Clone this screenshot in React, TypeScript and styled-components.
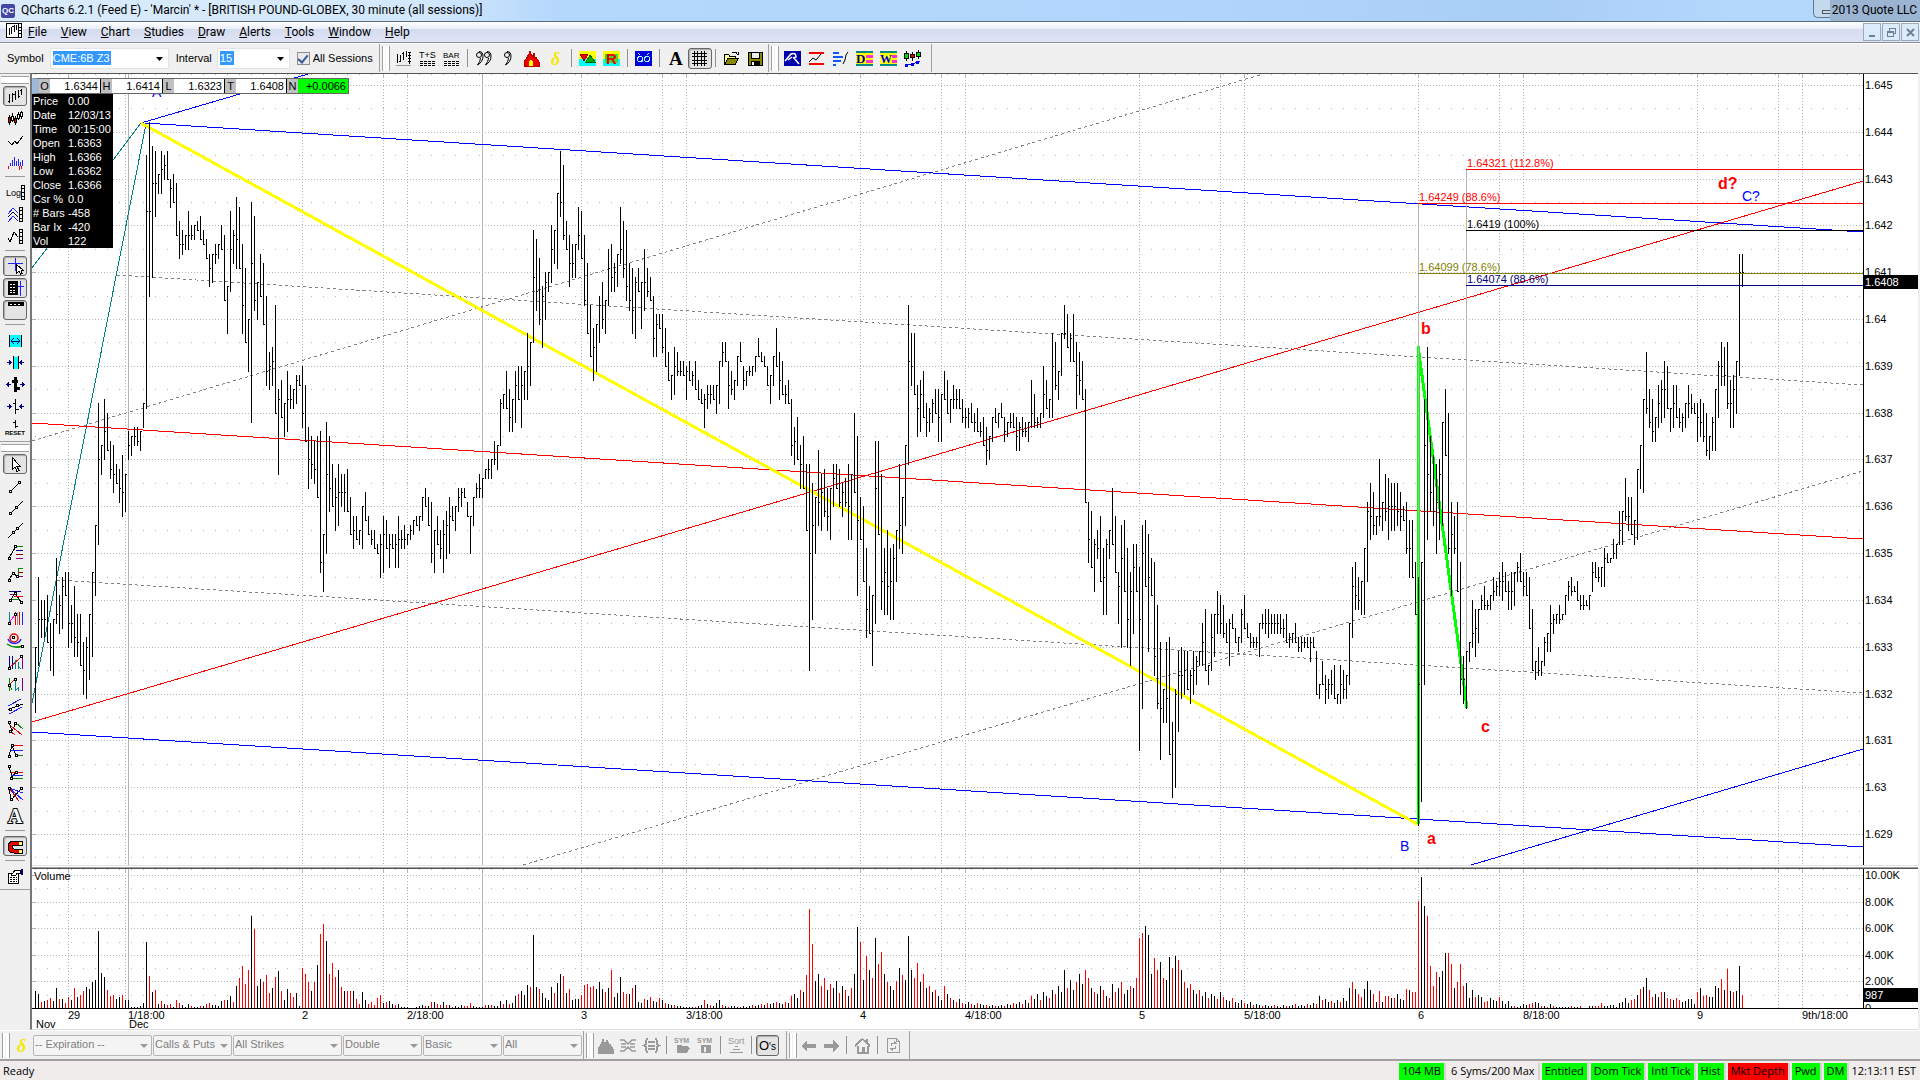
import React from "react";
import styled, { createGlobalStyle, css } from "styled-components";

/* ------------------------------------------------------------------ */
/* Market data                                                         */
/* ------------------------------------------------------------------ */

const TICK = 4.681;
const BAR_STEP = 3;
const FIRST_BAR = 3;
const TOP_OFFSET = 11;
const VOLUME_BASE = 139;

// "high,low" of each 30 minute bar, in ticks below 1.6450
const RANGES = `
120,134 105,124 110,118 110,118 109,119 115,125 114,126 101,115 109,117 105,116
104,109 104,120 111,119 107,122 113,122 113,124 119,130 118,131 113,127 104,122
94,109 68,98 77,83 67,80 70,78 76,84 77,87 81,85 82,89 79,92
83,91 74,80 75,79 73,77 73,77 74,78 68,73 15,69 8,45 13,41
14,28 19,23 14,23 15,20 14,20 20,26 19,25 21,32 29,37 31,36
32,35 27,35 30,33 30,33 29,31 28,33 31,34 33,37 36,43 36,42
34,38 34,37 30,35 32,46 43,53 27,44 31,38 24,39 26,39 34,53
39,55 50,61 25,72 28,48 42,50 36,45 38,51 45,64 57,65 56,64
47,70 65,83 63,71 68,75 61,74 64,69 65,69 62,68 62,64 60,73
64,76 73,86 75,84 76,85 75,88 74,104 96,108 72,100 75,91 81,90
84,95 81,94 83,90 83,91 82,91 88,96 92,99 92,97 95,98 90,99
87,93 92,96 95,98 95,99 98,100 96,105 92,104 93,99 96,103 96,99
96,103 92,103 95,99 94,99 96,98 94,97 93,96 92,94 92,95 88,93
86,90 88,94 89,102 95,104 92,98 95,101 93,104 91,101 88,100 90,93
90,95 86,91 86,90 86,88 89,92 92,100 88,94 85,88 83,88 84,88
82,84 80,84 80,84 76,81 77,82 67,77 66,69 61,69 65,74 67,74
61,72 60,67 60,73 61,67 53,67 55,64 31,55 33,48 37,51 43,56
40,50 40,44 30,42 31,38 23,39 14,28 17,33 29,35 32,43 34,41
34,41 26,35 27,37 32,47 38,53 47,58 52,63 51,61 45,55 42,52
46,53 35,47 34,44 38,44 36,43 26,38 29,41 31,46 38,48 39,53
41,54 39,44 42,52 35,48 39,45 41,46 45,58 49,58 49,52 49,57
52,60 57,63 62,67 56,66 57,62 59,62 59,62 60,67 59,63 61,64
59,65 63,67 65,68 66,73 64,69 64,68 64,67 64,70 59,68 55,60
55,59 59,69 61,66 63,67 58,64 55,59 60,65 61,64 60,62 60,62
58,61 54,58 57,59 58,60 60,64 62,68 58,64 52,60 57,67 59,66
64,68 63,68 67,79 73,81 71,80 77,86 75,86 81,95 81,125 85,114
88,100 78,94 83,95 82,92 86,95 86,97 81,90 81,86 82,90 85,92
84,90 81,97 83,97 70,87 75,109 88,97 90,106 99,118 107,117 109,124
76,115 76,96 83,112 99,113 95,113 99,114 98,114 95,106 81,99 88,100
77,94 47,81 53,64 53,66 64,75 63,74 61,71 68,75 69,74 67,72
65,70 65,76 66,76 61,67 63,70 67,72 64,69 65,69 65,69 67,72
69,73 69,73 68,72 70,74 69,74 72,75 71,77 73,81 75,80 71,76
69,72 70,73 68,71 71,76 72,75 70,73 70,73 71,78 72,78 71,75
72,75 72,76 63,73 66,73 71,73 70,73 60,71 63,69 67,71 53,71
55,65 61,67 53,62 47,54 49,56 53,59 49,59 55,69 57,66 59,67
65,89 89,102 91,103 97,108 95,101 92,106 99,113 97,113 95,101 86,98
92,104 104,115 94,120 93,108 99,120 104,124 98,117 98,108 103,142 94,133
93,107 96,121 101,109 102,126 111,133 119,144 129,136 119,136 118,143 136,152
129,150 121,138 120,131 121,130 121,129 125,132 121,130 122,128 121,124 115,124
112,125 124,128 113,125 113,122 108,117 109,117 111,118 115,119 114,124 113,116
116,119 118,121 112,119 109,116 115,118 117,120 118,120 118,120 115,122 113,116
112,117 112,118 113,117 113,117 113,117 113,117 114,118 113,119 117,120 117,119
115,119 118,121 118,121 118,120 118,120 118,123 118,120 121,130 128,131 123,128
126,132 127,131 125,130 124,131 130,132 124,132 125,131 126,131 115,128 103,118
102,112 105,112 106,113 99,113 89,106 85,97 87,96 92,96 80,94 89,95
83,93 84,97 85,95 85,95 85,94 87,95 90,93 89,100 93,105 93,105
102,113 105,158 102,153 67,128 56,97 75,91 79,94 81,100 80,97 72,94
65,79 70,100 89,109 92,100 89,108 102,130 122,132 121,133 119,123 110,120
112,122 112,119 109,112 107,112 110,112 109,112 105,110 106,109 104,109 102,110
104,108 106,112 104,112 104,111 102,106 100,106 104,109 104,109 105,116 112,125
123,127 120,126 123,126 118,124 117,121 111,121 113,117 113,115 111,115 113,114
109,113 106,110 105,109 107,108 106,110 109,112 109,112 110,111 109,112 102,108
102,105 103,106 103,107 99,107 100,102 101,102 97,101 98,101 91,98 91,98
84,93 88,95 88,96 93,98 82,97 77,86 67,87 57,70 65,73 67,76
71,76 64,73 63,72 59,71 60,69 69,74 64,73 64,71 69,73 70,74
68,73 64,71 66,70 68,70 68,76 67,75 68,76 70,79 75,80 71,78
65,78 59,71 55,64 56,64 55,69 63,73 62,73 59,70 36,62 36,43`
  .trim()
  .split(/\s+/)
  .map((pair) => pair.split(",").map(Number));

// bar heights of the volume study; a negative value is a down bar
const VOLUMES = `
17 14 -6 7 -8 -10 7 20 -9 9 -5 -11 8 -20 11 -13 -17 21 19 26
28 77 35 31 -18 -12 -13 9 11 -13 8 8 1 1 1 2 5 66 -32 16
-18 4 -7 4 -3 -4 1 -8 -5 3 1 4 -2 1 1 -2 2 -4 -5 3
3 2 7 -8 8 12 -6 22 -30 -42 -24 -38 92 -79 22 29 -26 -33 -15 20
-31 37 -17 8 19 -15 -11 15 2 -40 -34 -26 17 -26 43 -74 -84 67 -34 -45
-31 38 -21 17 -17 -17 17 -9 -4 16 8 -4 -6 -3 -10 -13 5 -6 7 4
-3 4 1 1 1 0 0 1 2 3 -2 2 -6 6 -4 -3 6 -3 3 -1
2 1 3 -2 -2 -5 2 1 1 1 -3 3 -3 2 2 7 -4 8 -4 5
12 -14 17 13 23 -21 73 21 -19 15 10 8 21 -15 25 34 -32 15 -19 8
9 9 -13 -23 -24 -21 -22 19 26 19 -16 20 -38 11 15 31 -16 -14 14 -20
23 6 5 -9 8 -11 7 6 -10 8 -5 4 3 -3 2 2 1 1 1 1
-1 2 3 -8 4 -3 2 5 8 -3 2 -1 2 2 1 -1 2 1 2 -3
2 3 -4 3 -5 4 5 -6 5 4 -6 5 -12 14 10 -18 16 -33 -99 -64
27 34 -22 -30 18 -24 20 27 -15 22 -18 12 -20 34 81 -66 28 -52 38 -30
70 -44 -56 34 -26 22 18 -27 40 -33 28 72 38 -30 -45 26 -34 20 -22 16
-18 12 8 -22 14 -10 8 -6 9 -5 4 6 -4 3 -5 4 3 -3 2 3
-2 2 3 -2 4 3 -5 4 6 -4 8 5 -12 9 14 -8 16 12 -10 18
-14 22 16 38 -20 28 18 -26 34 24 -38 -30 20 -16 14 22 -18 12 -10 24
-16 20 -26 14 18 -22 20 -30 -70 -75 82 73 34 -50 -38 46 -30 28 51 -40
52 -48 38 -26 20 -24 18 14 -18 12 16 -10 14 12 -9 16 -11 8 7 -10
6 5 8 -5 4 6 -3 4 3 -2 3 2 2 -3 2 1 3 -2 2 3
-4 2 3 2 -4 3 5 -4 12 -8 9 6 -7 5 8 -6 10 7 20 -26
19 -14 -11 19 27 18 -14 6 -17 6 -12 -12 10 -10 14 9 8 -19 18 -16
-16 -107 131 102 -92 -42 -22 -36 31 37 55 -55 -44 20 -26 -44 -22 25 10 18
-11 13 11 -6 -7 10 8 7 -11 7 4 7 2 -2 1 2 4 3 -4 -5
6 5 -2 2 -1 4 -2 1 1 1 1 1 -2 1 1 -2 0 0 2 2
-2 -2 -5 2 2 3 3 1 5 6 10 5 -8 -9 13 -19 21 30 -18 -11
14 11 -16 16 -10 -9 8 -10 -8 6 7 9 9 4 -16 20 -12 -13 11 11
22 20 -29 18 -39 17 -16 17 42 -13`
  .trim()
  .split(/\s+/)
  .map(Number);

const barX = (i: number) => FIRST_BAR + i * BAR_STEP + 0.5;
const priceY = (ticks: number) => TOP_OFFSET + Math.round(ticks * TICK);

const closeOf = (i: number) => {
  const [high, low] = RANGES[i];
  const [nextHigh, nextLow] = RANGES[i + 1] ?? RANGES[i];
  return Math.min(low, Math.max(high, Math.round((nextHigh + nextLow) / 2)));
};

const PRICE_PATH = RANGES.map(
  ([high, low], i) =>
    `M${barX(i)} ${priceY(high)}V${priceY(low) + 1}M${barX(i) + 0.5} ${priceY(closeOf(i)) + 0.5}h1`
).join("");

const volumePath = (down: boolean) =>
  VOLUMES.map((v, i) =>
    v !== 0 && v < 0 === down ? `M${barX(i)} ${VOLUME_BASE}v${-Math.abs(v)}` : ""
  ).join("");

const DOTTED_COLUMNS = [36, 93, 270, 351, 375, 549, 630, 654, 828, 909, 933, 1107, 1188, 1212, 1386, 1467, 1491, 1665, 1746, 1770];
const SOLID_COLUMNS = [96, 450];

const PRICE_LABELS = Array.from({ length: 17 }, (_, i) => String(Number((1.645 - i * 0.001).toFixed(3))));

const TIME_LABELS: [number, string][] = [
  [36, "29"], [96, "1/18:00"], [270, "2"], [375, "2/18:00"], [549, "3"], [654, "3/18:00"], [828, "4"],
  [933, "4/18:00"], [1107, "5"], [1212, "5/18:00"], [1386, "6"], [1491, "8/18:00"], [1665, "9"], [1770, "9th/18:00"],
];

const QUOTE: [string, string][] = [["O", "1.6344"], ["H", "1.6414"], ["L", "1.6323"], ["T", "1.6408"], ["N", "+0.0066"]];

const CURSOR_ROWS: [string, string][] = [
  ["Price", "0.00"], ["Date", "12/03/13"], ["Time", "00:15:00"], ["Open", "1.6363"], ["High", "1.6366"], ["Low", "1.6362"],
  ["Close", "1.6366"], ["Csr %", "0.0"], ["# Bars", "-458"], ["Bar Ix", "-420"], ["Vol", "122"],
];

/* ------------------------------------------------------------------ */
/* Styles                                                              */
/* ------------------------------------------------------------------ */

const UI = `Roboto, "Open Sans", sans-serif`;
const ARIAL = `"Liberation Sans", Arial, sans-serif`;

const GlobalStyle = createGlobalStyle`
  * { box-sizing: border-box; }
  body { margin: 0; background: #f0f0f0; }
  button, input, select { font: inherit; margin: 0; color: inherit; }
`;

const Shell = styled.div`
  display: flex;
  flex-direction: column;
  min-height: 100vh;
  font: 11px/14px ${ARIAL};
  color: #000;
  overflow: hidden;
`;

const TitleBar = styled.header`
  display: flex;
  align-items: stretch;
  height: 22px;
  background: linear-gradient(90deg, #d9ebfb 0, #d3e8fc 420px, #b4d7fc 560px, #b2d6fb 60%, #a9cef5 80%, #b4d7fc 90%);
  border-bottom: 1px solid #5a6a7c;
  font: 12px/21px ${UI};
`;

const AppBadge = styled.span`
  align-self: center;
  width: 14px;
  height: 14px;
  margin: 0 6px 0 1px;
  border-radius: 2px;
  background: #4247a5;
  color: #fff;
  font: bold 8px/14px ${ARIAL};
  text-align: center;
`;

const Title = styled.h1`
  flex: 1;
  margin: 0;
  font: inherit;
  white-space: nowrap;
`;

const CaptionButton = styled.button`
  width: 17px;
  height: 18px;
  padding: 0 0 0 8px;
  border: 1px solid #5f7690;
  border-width: 0 0 1px 1px;
  border-radius: 0 0 0 5px;
  background: #c5d9ee;
`;

const Copyright = styled.span`
  padding: 0 3px 0 2px;
  background: #9ab4d1;
  white-space: nowrap;
`;

const MenuBar = styled.nav`
  display: flex;
  align-items: stretch;
  height: 21px;
  padding: 0 1px 0 6px;
  background: linear-gradient(#fff, #e8edf8 35%, #d5dcef 36%, #dfe4f5);
  border-bottom: 1px solid #8e8f94;
  font: 12px/20px ${UI};
`;

const MenuIcon = styled.span`
  width: 15px;
  height: 17px;
  svg { background: #fff; }
`;

const MenuItem = styled.button`
  padding: 0 7px;
  border: 0;
  background: none;
  &::first-letter { text-decoration: underline; }
`;

const Spacer = styled.div`
  flex: 1;
`;

const MdiButton = styled.button`
  width: 18px;
  height: 18px;
  margin: 1px 0 0 1px;
  padding: 0;
  border: 1px solid #9aabbd;
  background: #dcebf9;
  display: grid;
  place-items: center;
`;

const Toolbar = styled.div`
  display: flex;
  align-items: flex-start;
  height: 30px;
  border-top: 1px solid #fff;
  background: #f0f0f0;
`;

const ToolButton = styled.button<{ $pressed?: boolean; $side?: boolean }>`
  display: grid;
  place-items: center;
  flex: none;
  width: 24px;
  height: ${({ $side }) => ($side ? 22 : 24)}px;
  padding: 0;
  border: 0;
  background: none;
  ${({ $pressed, $side }) =>
    $pressed &&
    css`
      height: ${$side ? 20 : 21}px;
      ${$side && "margin: 1px 0;"}
      border: 1px solid #666;
      border-radius: 3px;
      background: #e4e4e4;
      box-shadow: inset 1px 1px 1px #aaa;
    `}
`;

const Band = styled.div<{ $grip?: boolean; $tight?: boolean; $end?: number }>`
  display: flex;
  align-items: center;
  height: 28px;
  padding-right: ${({ $end = 0 }) => $end}px;
  border-right: 1px solid #a0a0a0;
  ${({ $grip, $tight }) =>
    $grip &&
    css`
      &::before {
        content: "";
        width: 6px;
        height: 25px;
        margin: 0 ${$tight ? 0 : 2}px 0 2px;
        border: 1px solid #a0a0a0;
        border-width: 0 1px;
        background: linear-gradient(90deg, #fff 2px, #f0f0f0 2px, #f0f0f0 3px, #fff 3px);
      }
    `}
  ${({ $tight }) => $tight && css`${ToolButton} { width: 23px; }`}
`;

const Field = styled.label<{ $gap: number }>`
  display: flex;
  align-items: center;
  gap: ${({ $gap }) => $gap}px;
  padding-left: 7px;
`;

const Combo = styled.span<{ $width: number }>`
  display: flex;
  align-items: flex-start;
  width: ${({ $width }) => $width}px;
  height: 21px;
  padding: 2px;
  border: 1px solid #e3e3ea;
  background: #fff;
`;

const ComboInput = styled.input<{ $width: number }>`
  width: ${({ $width }) => $width}px;
  height: 14px;
  padding: 0;
  border: 0;
  background: #3399ff;
  color: #fff;
`;

const ArrowButton = styled.button`
  display: grid;
  place-items: center;
  width: 13px;
  height: 16px;
  margin-left: auto;
  padding: 0;
  border: 0;
  background: none;
`;

const SessionCheck = styled.label`
  display: flex;
  align-items: center;
  gap: 3px;
  padding: 0 6px 0 7px;
  input {
    appearance: none;
    width: 13px;
    height: 13px;
    border: 1px solid #8e8f8f;
    background: #e6eaef;
    display: grid;
    place-items: center;
  }
  input:checked::after {
    content: "";
    width: 4px;
    height: 8px;
    margin-bottom: 2px;
    border: solid #3c5a9a;
    border-width: 0 2px 2px 0;
    transform: rotate(40deg);
  }
`;

const Divider = styled.span`
  width: 1px;
  height: 18px;
  margin: 0 4px 0 3px;
  background: #909090;
`;

const Workspace = styled.main`
  display: flex;
  flex: 1;
`;

const SideBar = styled.aside`
  flex: none;
  width: 30px;
  border-top: 1px solid #a0a0a0;
`;

const SideBand = styled.div`
  display: flex;
  flex-direction: column;
  align-items: center;
  padding-bottom: 2px;
  border-bottom: 1px solid #a0a0a0;
  &::before {
    content: "";
    width: 28px;
    height: 6px;
    margin: 2px 0 1px;
    border: 1px solid #a0a0a0;
    border-width: 1px 0;
    background: #fff;
  }
`;

const SideDivider = styled.span`
  width: 20px;
  height: 1px;
  margin: 3px 0 4px;
  background: #999;
`;

const ChartFrame = styled.section`
  display: flex;
  flex: 1;
  flex-direction: column;
  min-width: 0;
  margin-right: 2px;
  border: 2px solid #a0a0a0;
  border-top: 1px solid #555;
  border-left-color: #777;
  border-right: 0;
  border-bottom: 1px solid #dcdcdc;
  background: #fff;
`;

const Pane = styled.div<{ $height?: number }>`
  display: flex;
  position: relative;
  min-height: 0;
  ${({ $height }) => ($height ? `height: ${$height}px;` : "flex: 1 0 791px;")}
`;

const Splitter = styled.div`
  height: 4px;
  background: linear-gradient(#e3e3e3 1px, #fff 1px, #fff 2px, #a0a0a0 2px, #a0a0a0 3px, #555 3px);
`;

const Plot = styled.svg`
  flex: 1;
  min-width: 0;
  height: 100%;
  shape-rendering: crispEdges;
  font: 11px ${ARIAL};
`;

const Axis = styled.svg`
  flex: none;
  width: 55px;
  height: 100%;
  border-left: 1px solid #000;
  font: 11px ${ARIAL};
`;

const TimeAxis = styled.svg`
  width: 100%;
  height: 21px;
  border-top: 1px solid #000;
  font: 11px ${ARIAL};
`;

const QuoteStrip = styled.dl`
  position: absolute;
  top: 4px;
  left: 0;
  display: flex;
  margin: 0;
  border: 1px solid #666;
  border-left: 7px solid #9db8d9;
  background: #fff;
  dt {
    width: 11px;
    background: #c0c0c0;
    text-align: center;
  }
  dd {
    width: 51px;
    margin: 0;
    padding-right: 2px;
    border-right: 1px solid #000;
    text-align: right;
  }
  dd:last-child {
    width: 50px;
    border: 0;
    background: #0f0;
  }
`;

const CursorTable = styled.table`
  position: absolute;
  top: 20px;
  left: 0;
  width: 81px;
  border-spacing: 0;
  background: #000;
  color: #fff;
  th,
  td {
    height: 14px;
    padding: 0 0 0 1px;
    font-weight: normal;
    text-align: left;
    white-space: nowrap;
  }
  th { width: 35px; }
`;

const BottomBar = styled(Toolbar)`
  border-bottom: 1px solid #a0a0a0;
`;

const Picker = styled.label<{ $width: number }>`
  position: relative;
  width: ${({ $width }) => $width}px;
  margin-right: 1px;
  color: #808080;
  select {
    appearance: none;
    width: 100%;
    height: 21px;
    padding: 0 14px 2px 1px;
    border: 1px solid #b5b5b5;
    border-radius: 2px;
    background: #f4f4f4;
    color: #808080;
    opacity: 1;
  }
  &::after {
    content: "";
    position: absolute;
    top: 9px;
    right: 4px;
    border: 4px solid transparent;
    border-top-color: #999;
    border-bottom: 0;
  }
`;

const StatusBar = styled.footer`
  display: flex;
  align-items: stretch;
  gap: 4px;
  height: 20px;
  padding: 2px 4px 0 3px;
  border-top: 1px solid #a0a0a0;
  background: #f0ecec;
  font: 11px/16px "Open Sans", "Noto Sans", sans-serif;
  white-space: nowrap;
`;

const Chip = styled.span<{ $tone?: "on" | "off" }>`
  padding: 0 3px;
  box-shadow: 2px 0 0 #d7d3d3;
  background: ${({ $tone }) => ($tone === "on" ? "#00ff00" : $tone === "off" ? "#ff0000" : "none")};
`;

const IconSvg = styled.svg`
  display: block;
  overflow: visible;
  shape-rendering: crispEdges;
  fill: none;
  stroke: #000;
  text { stroke: none; fill: #000; }
`;

/* ------------------------------------------------------------------ */
/* Icons, drawn on a 17 x 17 grid                                      */
/* ------------------------------------------------------------------ */

const Node = ({ at }: { at: [number, number][] }) => (
  <>{at.map(([x, y]) => <rect key={`${x}-${y}`} x={x - 0.5} y={y - 0.5} width="2" height="2" fill="#fff" />)}</>
);

const G = "#999";
const rows = <path d="M1 11.5H16M1 13.5H16M1 15.5H16" strokeDasharray="3 1" />;
const scale = <path d="M12.5 1.5H15.5V15.5H12.5ZM12 4.5H16M12 8.5H16M12 12.5H16" />;

const ICONS: Record<string, React.ReactNode> = {
  menuChart: <path d="M0.5 1.5H15.5V15.5H0.5ZM3.5 6V13M5.5 5V12M8.5 3V10M8 4.5H6M10.5 3V8M12.5 2V15M13 5.5H15M13 8.5H15M13 11.5H15" />,
  chart: <><path d="M1 15.5H16" stroke={G} /><path d="M2.5 4V13M5.5 5V12M5 11.5H4M8.5 2V10M8 3.5H7M11.5 1V7M14.5 1.5V14M13 2.5H16M13 5.5H16M13 8.5H16M13 11.5H16" /></>,
  timeSales: <><text x="0" y="8" fontSize="9">T+S</text>{rows}</>,
  bar: <><text x="0" y="8" fontSize="8">BAR</text>{rows}</>,
  quotes: <g shapeRendering="auto"><circle cx="4" cy="5" r="2.5" /><path d="M4 1.5Q8 1.5 8 6Q8 12 2.5 15Q5.5 11 5.5 8" /><circle cx="12" cy="5" r="2.5" /><path d="M12 1.5Q16 1.5 16 6Q16 12 10.5 15Q13.5 11 13.5 8" /></g>,
  quote: <g shapeRendering="auto"><circle cx="8" cy="5" r="2.5" /><path d="M8 1.5Q12 1.5 12 6Q12 12 6.5 15Q9.5 11 9.5 8" /></g>,
  fire: <><path d="M1 16V12L4 7V10L7 1L9 8L11 3L12 8L13 7L16 12V16Z" fill="#e00" stroke="#b00" /><path d="M6 16V12L8 9L10 12V16Z" fill="#ff0" stroke="none" /></>,
  delta: <text x="4" y="15" fontSize="18" fontStyle="italic" fontWeight="bold" fontFamily="Liberation Serif" style={{ fill: "#f4e800" }}>δ</text>,
  hotList: <><path d="M0 1H17V9H0Z" fill="#ff0" stroke="none" /><path d="M0 9H17V16H0Z" fill="#0ff" stroke="none" /><path d="M1 4H9L5 11Z" fill="#e00" stroke="#a00" /><path d="M7 12L11 5L16 12Z" fill="#0a0" stroke="#060" /></>,
  rank: <><path d="M0 1H17V9H0Z" fill="#ff0" stroke="none" /><path d="M0 9H17V16H0Z" fill="#0ff" stroke="none" /><path d="M2 4H15V13H2Z" fill="#3d3" stroke="none" /><text x="3" y="14" fontSize="15" fontWeight="bold" style={{ fill: "#e00" }}>R</text></>,
  qc: <><path d="M0 1H17V16H0Z" fill="#00d" stroke="none" /><g stroke="#9ff"><circle cx="5" cy="9" r="2.5" /><circle cx="12" cy="9" r="2.5" /><path d="M6 10L8 12M3 3L5 5M14 3L12 5" /></g></>,
  letterA: <text x="2" y="15" fontSize="19" fontFamily="Liberation Serif" fontWeight="bold">A</text>,
  grid: <path d="M1 3.5H16M1 6.5H16M1 10.5H16M1 13.5H16M3.5 1V16M6.5 1V16M10.5 1V16M13.5 1V16" />,
  open: <><path d="M1.5 14.5V4.5H5.5L7 6.5H12.5V8.5" fill="#ff9" /><path d="M1.5 14.5L5 8.5H15.5L12 14.5Z" fill="#880" /><path d="M9 2.5H13L14.5 5M15 2V5" /></>,
  save: <><path d="M1.5 2.5H15.5V15.5H1.5Z" fill="#880" /><path d="M4.5 2.5H12.5V8.5H4.5Z" fill="#eee" /><path d="M4.5 11H12.5V15.5H4.5Z" fill="#000" /><path d="M6 12V15" stroke="#fff" strokeWidth="2" /></>,
  wave: <><path d="M0 1H17V16H0Z" fill="#00a" stroke="none" /><path shapeRendering="auto" d="M1 11L7 4Q12 2 12 7L9 8M10 8L15 14M4 10L8 7" stroke="#fff" strokeWidth="1.5" /></>,
  channel: <><path d="M1 3H16M1 14H16" stroke="#f00" strokeWidth="2" /><path shapeRendering="auto" d="M1 12L5 8L8 10L13 4" /></>,
  profile: <><path d="M1 3H7M1 7H11M1 11H9M1 15H4" stroke="#15f" strokeWidth="2" /><path shapeRendering="auto" d="M11 14L13 10L14 5L16 2" /></>,
  daily: <><path d="M0 1H17V3H0ZM0 14H17V16H0Z" fill="#088" stroke="none" /><path d="M0 3H17V14H0Z" fill="#ff0" stroke="none" /><path d="M10 6H17M10 11H17" stroke="#f3c" strokeWidth="3" /><text x="0" y="13" fontSize="13" fontWeight="bold" fontFamily="Liberation Serif" style={{ fill: "#008" }}>D</text></>,
  weekly: <><path d="M0 1H17V3H0ZM0 14H17V16H0Z" fill="#088" stroke="none" /><path d="M0 3H17V14H0Z" fill="#ff0" stroke="none" /><path d="M12 6H17M12 11H17" stroke="#f3c" strokeWidth="3" /><text x="0" y="13" fontSize="12" fontWeight="bold" fontFamily="Liberation Serif" style={{ fill: "#00d" }}>W</text></>,
  candles: <><path d="M2.5 1V11M8.5 2V11M14.5 0V9" /><path d="M0.5 3.5H4.5V8.5H0.5ZM12.5 2.5H16.5V6.5H12.5Z" fill="#0d0" /><path d="M6.5 4.5H10.5V7.5H6.5Z" fill="#e00" /><path d="M1 15H4M7 14H10M12 12H15" stroke="#00e" strokeWidth="3" /><path d="M2 15L9 14L16 11" stroke="#00e" /></>,

  ohlc: <path d="M2.5 6V15M1 13.5H2M5.5 5V14M5 6.5H8M8.5 3V12M11.5 2V10M13 8.5H11M14.5 1V7M13 2.5H14" />,
  candle: <><path d="M2.5 5V15M5.5 3V12M8.5 6V15M11.5 2V10M14.5 1V9" /><path d="M1.5 7.5H3.5V12.5H1.5ZM7.5 8.5H9.5V12.5H7.5Z" fill="#d00" /><path d="M4.5 6.5H6.5V10.5H4.5ZM10.5 4.5H12.5V8.5H10.5ZM13.5 2.5H15.5V6.5H13.5Z" fill="#fff" /></>,
  line: <path d="M1 9L5 13L8 9L10 12L16 4" />,
  histogram: <><path d="M3.5 9V12M5.5 6V12M7.5 3V12M9.5 7V12M11.5 5V12M13.5 8V12M15.5 6V12" stroke="#22f" /><path d="M1.5 12V15M12.5 12V16M14.5 12V15" stroke="#e00" /></>,
  log: <><text x="-1" y="12" fontSize="9">Log</text><path d="M14.5 1.5H17.5V15.5H14.5ZM14 4.5H18M14 8.5H18M14 12.5H18" /></>,
  bands: <><path d="M1 8L6 2L11 7M1 16L6 10L11 15" stroke="#22f" /><path d="M1 11L6 6L11 11" />{scale}</>,
  scaleLine: <><path d="M1 10L3 14L7 4L11 9" />{scale}</>,
  crosshair: <><path d="M1 5.5H16M8.5 0V13" stroke="#22f" /><path d="M9.5 6.5V15L12 13L13.5 16.5L15 15.5L14 12H16Z" fill="#fff" /></>,
  dataWindow: <><path d="M1.5 1.5H10.5V14.5H1.5Z" fill="#000" /><path d="M3 4.5H9M3 7.5H9M3 10.5H9M3 12.5H9" stroke="#fff" strokeDasharray="2 1" /><path d="M13.5 1V16M11 6.5H17" stroke="#22f" /></>,
  header: <><path d="M1 0.5H16V3.5H1Z" fill="#000" /><path d="M3 2H15" stroke="#fff" strokeDasharray="2 2" /></>,
  spread: <><path d="M2 3H15V15H2Z" fill="#0ff" stroke="none" /><path d="M2.5 3V15M14.5 3V15" /><path d="M4 9H13M7 6L4 9L7 12M10 6L13 9L10 12" stroke="#008" /></>,
  squeeze: <><path d="M6 3H11V15H6Z" fill="#0ff" stroke="none" /><path d="M6.5 2V15M11.5 2V15" /><path d="M0 8.5H4M13 8.5H17M2 6.5L4 8.5L2 10.5M15 6.5L13 8.5L15 10.5" stroke="#008" strokeWidth="1.5" /></>,
  widen: <><path d="M8 1V16M5 5H11M7 12H13" strokeWidth="3" /><path d="M0 8.5H4M13 8.5H17M2 6.5L0 8.5L2 10.5M15 6.5L17 8.5L15 10.5" stroke="#008" strokeWidth="1.5" /></>,
  narrow: <><path d="M8.5 1V16M6 5.5H8M9 11.5H12" /><path d="M0 8.5H4M13 8.5H17M2 6.5L4 8.5L2 10.5M15 6.5L13 8.5L15 10.5" stroke="#008" strokeWidth="1.5" /></>,
  reset: <><path d="M8.5 0V8M6 2.5H8M9 6.5H11" /><text x="-2" y="15" fontSize="6" fontWeight="bold">RESET</text></>,
  cursor: <path d="M5.5 1.5V13L8 11L10 15.5L12 14.5L10 10.5H13Z" fill="#fff" />,
  segment: <><path d="M4 13L13 4" /><Node at={[[3, 13], [12, 4]]} /></>,
  ray: <><path d="M4 13L16 1" /><Node at={[[3, 13], [9, 7]]} /></>,
  infinite: <><path d="M1 16L16 1" /><Node at={[[6, 10], [10, 6]]} /></>,
  fibRetrace: <><path d="M2 14L9 2" /><path d="M9 2.5H16" stroke="#080" /><path d="M9 6.5H16" stroke="#008" /><path d="M9 10.5H16" stroke="#800" /><path d="M9 14.5H16" stroke="#808" /><Node at={[[2, 14], [8, 2]]} /></>,
  fibExtend: <><path d="M2 14L6 7L11 11" /><path d="M11.5 12V2.5H16" stroke="#080" /><path d="M11 6.5H16" stroke="#800" /><path d="M11 10.5H16" stroke="#808" /><Node at={[[2, 14], [6, 7], [10, 10]]} /></>,
  fibFan: <><path d="M3 13L8 5L14 14" /><path d="M2 3.5H14" stroke="#008" /><path d="M3 6.5H9" stroke="#808" /><path d="M7 8.5H16" stroke="#e00" /><path d="M3 11.5H12" stroke="#080" /><Node at={[[3, 12], [8, 5], [14, 14]]} /></>,
  timeZones: <><path d="M2 13L8 5" stroke="#f0f" /><path d="M2.5 2V15" stroke="#088" /><path d="M8.5 2V15M12.5 2V15" stroke="#e00" /><path d="M10.5 2V15" stroke={G} /><path d="M15.5 2V15" stroke="#22f" /><Node at={[[2, 13], [8, 4]]} /></>,
  arcs: <g shapeRendering="auto"><circle cx="7" cy="6" r="4" stroke="#e00" strokeWidth="1.5" /><path d="M1 7A7 7 0 0 0 14 7" stroke="#22f" strokeWidth="1.5" /><path d="M0 12Q7 17 16 14" stroke="#080" strokeWidth="1.5" /><Node at={[[6, 5], [15, 14]]} /></g>,
  cycles: <><path d="M2.5 2V15M5.5 2V15" stroke="#008" /><path d="M2 14L14 3" stroke="#e00" /><path d="M8.5 6V15M11.5 8V15" stroke="#088" /><path d="M15.5 3V15" stroke="#808" /><path d="M12 13L14 15" stroke="#088" /><Node at={[[2, 14], [14, 2]]} /></>,
  cycles2: <><path d="M2 9L8 3" stroke="#e00" /><path d="M2 8L5 14M2.5 2V15" stroke="#080" /><path d="M8.5 5V14L11 12V15" stroke="#088" /><path d="M15.5 2V15" stroke="#808" /><Node at={[[2, 9], [8, 3]]} /></>,
  parallel: <><path d="M1 8L14 1M2 16L15 9" stroke="#22f" /><path d="M1 11.5L16 6" /><Node at={[[3, 11], [10, 7]]} /></>,
  pitchfork: <><path d="M2 2L5 11L9 3" /><path d="M9 3L16 9" stroke="#080" /><path d="M4 6L15 15M3 11L8 15" stroke="#e00" /><Node at={[[2, 2], [3, 11], [8, 3]]} /></>,
  levels: <><path d="M2 14L5 3L9 14" /><path d="M5 3.5H16" stroke="#e00" /><path d="M4 8.5H16" stroke="#22f" /><path d="M10 13.5H16" stroke="#080" /><Node at={[[2, 14], [5, 3], [9, 13]]} /></>,
  levels2: <><path d="M2 2L5 13L9 8" /><path d="M4 8.5H16" stroke="#e00" /><path d="M4 11.5H16" stroke="#22f" /><path d="M4 14.5H16" stroke="#080" /><Node at={[[2, 2], [4, 14], [9, 8]]} /></>,
  gann: <><path d="M2 2L4 14L14 3" /><path d="M2 2L16 7M2 2L16 14" stroke="#22f" /><path d="M2 2L12 15" stroke="#e00" /><Node at={[[2, 2], [4, 13], [14, 2]]} /></>,
  text: <text x="1" y="15" fontSize="20" fontFamily="Liberation Serif" fontWeight="bold" style={{ fill: "#fff", stroke: "#000", strokeWidth: 2, paintOrder: "stroke" }}>A</text>,
  magnet: <><path d="M16 5H7Q3 5 3 9Q3 13 7 13H16" stroke="#000" strokeWidth="5" /><path d="M12 5H7Q3 5 3 9Q3 13 7 13H12" stroke="#e00" strokeWidth="3" /><path d="M12 5H15M12 13H15" stroke="#ff6" strokeWidth="3" /></>,
  properties: <><path d="M1.5 5.5H11.5V15.5H1.5Z" fill="#fff" /><path d="M3 9.5H10M3 11.5H10M3 13.5H10" strokeDasharray="2 1" /><path d="M4 7L8 2.5H13V5.5H10L8 8Z" fill="#fff" /><path d="M15 1V7" stroke="#008" strokeWidth="2" /></>,

  fireOff: <path d="M1 16V12L4 7V10L6 2L8 8L10 3L12 8L13 7L16 12V16Z" fill={G} stroke={G} />,
  cross: <path shapeRendering="auto" d="M0 3H4L8 7L12 3H16M0 14H4L8 10L12 14H16M1 7H6M10 7H15M1 10H6M10 10H15" stroke={G} strokeWidth="1.5" />,
  list: <><path d="M5 2Q3 2 3 5V7L1 8.5L3 10V12Q3 15 5 15M12 2Q14 2 14 5V7L16 8.5L14 10V12Q14 15 12 15" stroke={G} strokeWidth="2" /><path d="M5 5H12M5 8.5H12M5 12H12" stroke={G} strokeWidth="2" /></>,
  symOpen: <><text x="0" y="6" fontSize="7" fontWeight="bold" style={{ fill: G }}>SYM</text><path d="M3 16V8H7L8 9H13L16 11L13 16Z" fill={G} stroke="none" /></>,
  symSave: <><text x="0" y="6" fontSize="7" fontWeight="bold" style={{ fill: G }}>SYM</text><path d="M4 8H14V16H4Z" fill={G} stroke="none" /><path d="M8 10V15" stroke="#f0f0f0" strokeWidth="2" /></>,
  sort: <><text x="0" y="7" fontSize="9" style={{ fill: G }}>Sort</text><path d="M7 9.5H10M5 12.5H12M2 15.5H15" stroke={G} /></>,
  os: <><text x="0" y="13" fontSize="13">O</text><text x="10" y="13" fontSize="10">'s</text></>,
  back: <path d="M1 9L7 3V7H16V11H7V15Z" fill={G} stroke="none" />,
  forward: <path d="M16 9L10 3V7H1V11H10V15Z" fill={G} stroke="none" />,
  home: <><path d="M1 9L8.5 2L16 9" stroke={G} strokeWidth="2" /><path d="M3.5 9V15.5H13.5V9" stroke={G} strokeWidth="2" /><path d="M8 10H11V16H8ZM12 2H14V6H12Z" fill={G} stroke="none" /></>,
  refresh: <path d="M2.5 1.5H11.5L14.5 4.5V15.5H2.5ZM11.5 1.5V4.5H14.5M6 6.5H11L9 4.5M11 11.5H6L8 13.5M6.5 9V6M10.5 9V12" stroke={G} />,
  minimise: <path d="M5 12H11" stroke="#6b8199" strokeWidth="2" />,
  restore: <path d="M6.5 6.5V4.5H12.5V9.5H11M4.5 7.5H10.5V12.5H4.5ZM4 8.5H10" stroke="#6b8199" />,
  close: <path shapeRendering="auto" d="M5 5L12 12M12 5L5 12" stroke="#6b8199" strokeWidth="2" />,
};

const Icon = ({ name }: { name: string }) => (
  <IconSvg width="17" height="17" viewBox="0 0 17 17" aria-hidden="true">{ICONS[name]}</IconSvg>
);

/* "|" is a divider, a leading "*" marks a pressed tool */
const ToolSet = ({ items, side }: { items: string; side?: boolean }) => (
  <>
    {items.split(" ").map((item, i) => {
      if (item === "|") return side ? <SideDivider key={i} /> : <Divider key={i} />;
      const pressed = item.startsWith("*");
      const name = item.replace("*", "");
      return (
        <ToolButton key={i} type="button" aria-label={name} aria-pressed={pressed} $pressed={pressed} $side={side}>
          <Icon name={name} />
        </ToolButton>
      );
    })}
  </>
);

/* ------------------------------------------------------------------ */
/* Chart                                                               */
/* ------------------------------------------------------------------ */

const Grid = ({ first, step, count, height }: { first: number; step: number; count: number; height: string }) => (
  <g stroke="#b4b4b4">
    {Array.from({ length: count }, (_, i) => {
      const y = Math.round(first + i * step) + 0.5;
      const minor = Math.round(first + (i + 0.5) * step) + 0.5;
      return (
        <React.Fragment key={i}>
          <line x1="0" x2="100%" y1={y} y2={y} strokeDasharray="1 2" />
          <line x1="0" x2="3" y1={y} y2={y} />
          <line x1="3" x2="100%" y1={minor} y2={minor} strokeDasharray="1 11" />
        </React.Fragment>
      );
    })}
    {DOTTED_COLUMNS.map((x) => (
      <React.Fragment key={x}>
        <line x1={x + 0.5} x2={x + 0.5} y1="0" y2={height} strokeDasharray="1 2" />
        <line x1={x + 0.5} x2={x + 0.5} y1="0" y2="3" />
      </React.Fragment>
    ))}
    {SOLID_COLUMNS.map((x) => <line key={x} x1={x + 0.5} x2={x + 0.5} y1="0" y2={height} />)}
    <line x1="3" x2="100%" y1="0.5" y2="0.5" strokeDasharray="1 11" />
  </g>
);

const FIBS: [number, number, string, string][] = [
  [1434, 95, "#f00", "1.64321 (112.8%)"],
  [1386, 129, "#f00", "1.64249 (88.6%)"],
  [1434, 156, "#000", "1.6419 (100%)"],
  [1386, 199, "#808000", "1.64099 (78.6%)"],
  [1434, 211, "#000080", "1.64074 (88.6%)"],
];

const PricePlot = () => (
  <Plot role="img" aria-label="British Pound price chart">
    <Grid first={11} step={46.81} count={17} height="100%" />
    <g stroke="#808080" strokeDasharray="3 3">
      <path d="M0 367L1231 0M85 201L1831 311M25 506L1831 619M491 791L1831 397" />
    </g>
    <path d="M0 194L109 49M0 629L114 50" stroke="#008080" fill="none" />
    <path d="M109 49L276 0M112 49L1831 158M0 658L1831 773M1439 791L1831 675" stroke="#00f" fill="none" />
    <path d="M0 648L1831 107M0 349L1831 465" stroke="#f00" fill="none" />
    <path d="M109 49L1387 751" stroke="#ff0" strokeWidth="3" />
    <path d="M1386.5 272V750M1386 272L1435 634" stroke="#0f0" strokeWidth="3" />
    <path d="M1386.5 129V750M1434.5 95V628" stroke="#b4b4b4" />
    <path d={PRICE_PATH} stroke="#000" fill="none" />
    {FIBS.map(([x, y, color, label]) => (
      <React.Fragment key={label}>
        <text x={x + 1} y={y - 2} fill={color}>{label}</text>
        <line x1={x} x2="100%" y1={y + 0.5} y2={y + 0.5} stroke={color} />
      </React.Fragment>
    ))}
    <g fill="#f00" fontSize="16" fontWeight="bold">
      <text x="1686" y="115">d?</text>
      <text x="1389" y="260">b</text>
      <text x="1449" y="658">c</text>
      <text x="1395" y="770">a</text>
    </g>
    <g fill="#00f" fontSize="14">
      <text x="1710" y="127">C?</text>
      <text x="1368" y="777">B</text>
      <text x="120" y="23">A</text>
    </g>
  </Plot>
);

const VolumePlot = () => (
  <Plot role="img" aria-label="Volume chart">
    <Grid first={6} step={26.6} count={5} height="100%" />
    <path d={volumePath(false)} stroke="#000" />
    <path d={volumePath(true)} stroke="#f00" />
    <text x="2" y="11">Volume</text>
  </Plot>
);

const Marker = ({ y, children }: { y: number; children: string }) => (
  <>
    <rect x="0" y={y} width="100%" height="14" fill="#000" />
    <text x="1" y={y + 11} fill="#fff">{children}</text>
  </>
);

const Chart = () => (
  <ChartFrame>
    <Pane>
      <PricePlot />
      <Axis role="img" aria-label="Price axis">
        {PRICE_LABELS.map((label, i) => (
          <text key={label} x="1" y={Math.round(15 + i * 46.81)}>{label}</text>
        ))}
        <Marker y={201}>1.6408</Marker>
      </Axis>
      <QuoteStrip>
        {QUOTE.map(([name, value]) => (
          <React.Fragment key={name}>
            <dt>{name}</dt>
            <dd>{value}</dd>
          </React.Fragment>
        ))}
      </QuoteStrip>
      <CursorTable>
        <tbody>
          {CURSOR_ROWS.map(([name, value]) => (
            <tr key={name}>
              <th scope="row">{name}</th>
              <td>{value}</td>
            </tr>
          ))}
        </tbody>
      </CursorTable>
    </Pane>
    <Splitter />
    <Pane $height={VOLUME_BASE}>
      <VolumePlot />
      <Axis role="img" aria-label="Volume axis">
        {["10.00K", "8.00K", "6.00K", "4.00K", "2.00K", "0"].map((label, i) => (
          <text key={label} x="1" y={Math.round(10 + i * 26.6)}>{label}</text>
        ))}
        <Marker y={119}>987</Marker>
      </Axis>
    </Pane>
    <TimeAxis role="img" aria-label="Time axis">
      {TIME_LABELS.map(([x, label]) => <text key={label} x={x} y="10">{label}</text>)}
      <text x="4" y="19">Nov</text>
      <text x="97" y="19">Dec</text>
    </TimeAxis>
  </ChartFrame>
);

/* ------------------------------------------------------------------ */
/* Application                                                         */
/* ------------------------------------------------------------------ */

const Arrow = () => (
  <svg width="7" height="4" aria-hidden="true"><path d="M0 0H7L3.5 4Z" /></svg>
);

const PICKERS: [string, number][] = [
  ["-- Expiration --", 119], ["Calls & Puts", 79], ["All Strikes", 109], ["Double", 79], ["Basic", 79], ["All", 79],
];

const SERVICES: [string, "on" | "off"][] = [
  ["Entitled", "on"], ["Dom Tick", "on"], ["Intl Tick", "on"], ["Hist", "on"], ["Mkt Depth", "off"], ["Pwd", "on"], ["DM", "on"],
];

export default function App() {
  return (
    <Shell>
      <GlobalStyle />
      <TitleBar>
        <AppBadge>QC</AppBadge>
        <Title>QCharts 6.2.1 (Feed E) - 'Marcin' * - [BRITISH POUND-GLOBEX, 30 minute (all sessions)]</Title>
        <CaptionButton type="button" aria-label="Minimize window">
          <svg width="8" height="4" aria-hidden="true"><path d="M0 0.5H8M0.5 0V4M0 3.5H8" stroke="#555" fill="none" /></svg>
        </CaptionButton>
        <Copyright>2013 Quote LLC</Copyright>
      </TitleBar>

      <MenuBar aria-label="Main menu">
        <MenuIcon><Icon name="menuChart" /></MenuIcon>
        {["File", "View", "Chart", "Studies", "Draw", "Alerts", "Tools", "Window", "Help"].map((item) => (
          <MenuItem key={item} type="button">{item}</MenuItem>
        ))}
        <Spacer />
        {["minimise", "restore", "close"].map((name) => (
          <MdiButton key={name} type="button" aria-label={name}><Icon name={name} /></MdiButton>
        ))}
      </MenuBar>

      <Toolbar role="toolbar">
        <Band>
          <Field $gap={6}>
            Symbol
            <Combo $width={119}>
              <ComboInput $width={58} defaultValue="CME:6B Z3" />
              <ArrowButton type="button" aria-label="Show symbols"><Arrow /></ArrowButton>
            </Combo>
          </Field>
          <Field $gap={5}>
            Interval
            <Combo $width={73}>
              <ComboInput $width={14} defaultValue="15" />
              <ArrowButton type="button" aria-label="Show intervals"><Arrow /></ArrowButton>
            </Combo>
          </Field>
          <SessionCheck>
            <input type="checkbox" defaultChecked />
            All Sessions
          </SessionCheck>
        </Band>
        <Band $grip>
          <ToolSet items="chart timeSales bar | quotes quote fire delta | hotList rank | qc | letterA *grid | open save" />
        </Band>
        <Band $grip $end={6}>
          <ToolSet items="wave channel profile daily weekly candles" />
        </Band>
      </Toolbar>

      <Workspace>
        <SideBar>
          <SideBand>
            <ToolSet side items="*ohlc candle line histogram | log bands scaleLine | *crosshair *dataWindow *header | spread squeeze widen narrow reset" />
          </SideBand>
          <SideBand>
            <ToolSet side items="*cursor segment ray infinite fibRetrace fibExtend fibFan timeZones arcs cycles cycles2 parallel pitchfork levels levels2 gann text | *magnet | properties" />
          </SideBand>
        </SideBar>
        <Chart />
      </Workspace>

      <BottomBar role="toolbar">
        <Band $grip $tight>
          <ToolSet items="delta" />
          {PICKERS.map(([label, width]) => (
            <Picker key={label} $width={width}>
              <select disabled aria-label={label}>
                <option>{label}</option>
              </select>
            </Picker>
          ))}
        </Band>
        <Band $grip $tight $end={7}>
          <ToolSet items="fireOff cross list | symOpen symSave | sort | *os" />
        </Band>
        <Band $grip $tight $end={4}>
          <ToolSet items="back forward | home | refresh" />
        </Band>
      </BottomBar>

      <StatusBar>
        <span>Ready</span>
        <Spacer />
        <Chip $tone="on">104 MB</Chip>
        <Chip>6 Syms/200 Max</Chip>
        {SERVICES.map(([label, tone]) => <Chip key={label} $tone={tone}>{label}</Chip>)}
        <span>12:13:11 EST</span>
      </StatusBar>
    </Shell>
  );
}
